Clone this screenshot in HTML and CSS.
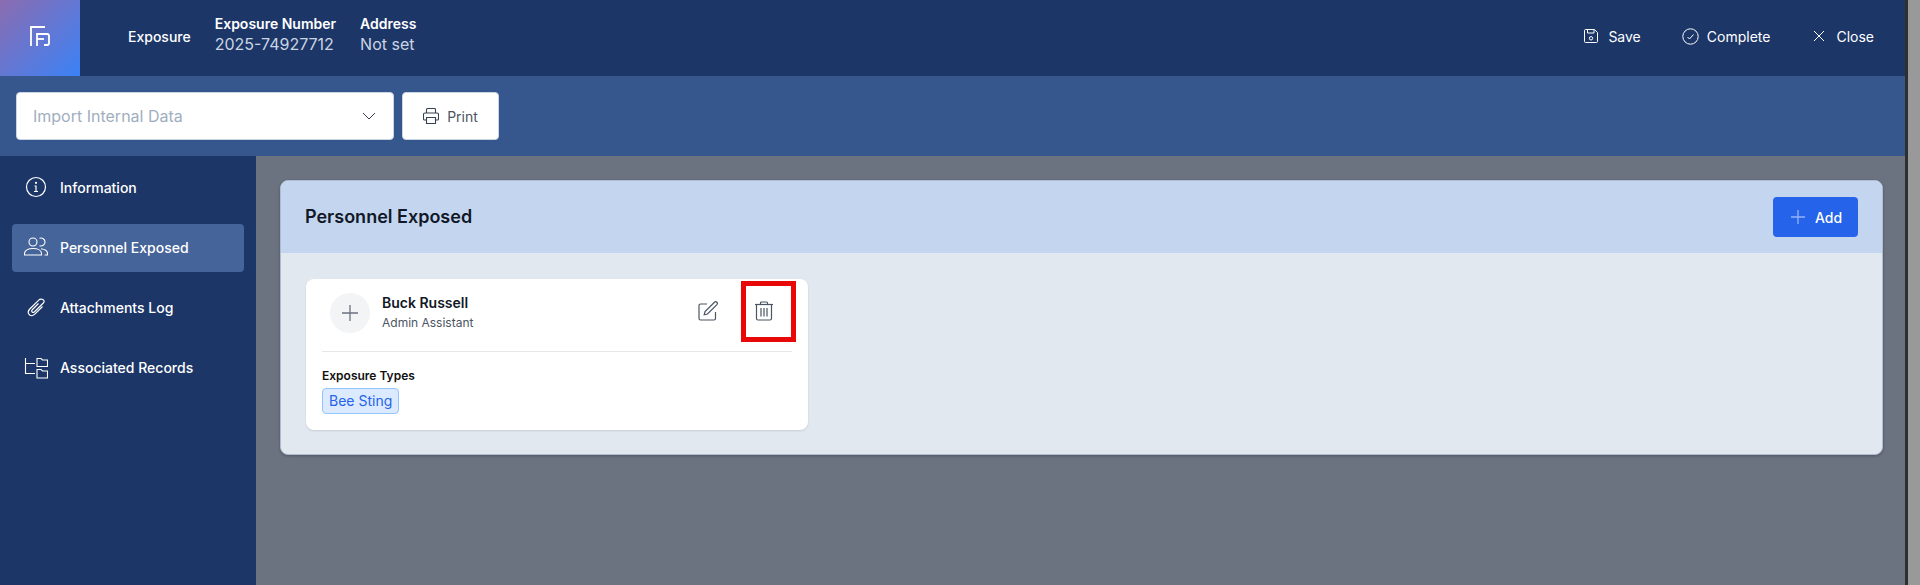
FILE: index.html
```html
<!DOCTYPE html>
<html lang="en">
<head>
  <meta charset="UTF-8">
  <meta name="viewport" content="width=device-width, initial-scale=1.0">
  <title>Exposure</title>
  <link rel="stylesheet" href="styles.css">
</head>
<body>
  <div class="app">
    <header class="topbar">
      <div class="logo">
        <svg width="20" height="20" viewBox="0 0 20 20" fill="none" stroke="#fff" stroke-width="1.800">
          <path d="M1 20V1h14"/>
          <path d="M7 20V8h10q2 0 2 2v7q0 2-2 2h-3"/>
          <path d="M7 13h7"/>
        </svg>
      </div>
      <div class="record-type">Exposure</div>
      <div class="record-field">
        <div class="field-label">Exposure Number</div>
        <div class="field-value">2025-74927712</div>
      </div>
      <div class="record-field">
        <div class="field-label">Address</div>
        <div class="field-value">Not set</div>
      </div>
      <div class="top-actions">
        <a class="top-action action-save">
          <svg width="14" height="14" viewBox="0 0 14 14" fill="none" stroke="#fff" stroke-width="1">
            <path d="M1.500.5h9l3 3v9a1 1 0 0 1-1 1h-11a1 1 0 0 1-1-1v-11a1 1 0 0 1 1-1z"/>
            <path d="M3.500.5v3.500h6.500v-3.500"/>
            <circle cx="7" cy="9.300" r="1.700"/>
          </svg>
          Save
        </a>
        <a class="top-action action-complete">
          <svg width="17" height="17" viewBox="0 0 17 17" fill="none" stroke="#fff" stroke-width="1">
            <circle cx="8.500" cy="8.500" r="7.700"/>
            <path d="M5.500 9l2 2 4-4.500"/>
          </svg>
          Complete
        </a>
        <a class="top-action action-close">
          <svg width="12" height="12" viewBox="0 0 12 12" fill="none" stroke="#fff" stroke-width="1">
            <path d="M1 1l10 10M11 1L1 11"/>
          </svg>
          Close
        </a>
      </div>
    </header>

    <div class="toolbar">
      <div class="select-box">
        <span>Import Internal Data</span>
        <svg width="14" height="8" viewBox="0 0 14 8" fill="none" stroke="#374151" stroke-width="1">
          <path d="M1 1l6 6 6-6"/>
        </svg>
      </div>
      <button class="print-btn">
        <svg width="16" height="16" viewBox="0 0 16 16" fill="none" stroke="#374151" stroke-width="1.100">
          <path d="M3.500 5V1.500a1 1 0 0 1 1-1h7a1 1 0 0 1 1 1V5"/>
          <path d="M3.500 12H1.500a1 1 0 0 1-1-1V6.500a1.500 1.500 0 0 1 1.500-1.500h12a1.500 1.500 0 0 1 1.500 1.500V11a1 1 0 0 1-1 1h-2"/>
          <path d="M3.500 9.500h9v6h-9z"/>
        </svg>
        Print
      </button>
    </div>

    <div class="layout">
      <nav class="sidebar">
        <a class="nav-item">
          <svg class="nav-icon" viewBox="0 0 24 24" fill="none" stroke="#fff" stroke-width="1.200">
            <circle cx="12" cy="12" r="9.500"/>
            <path d="M10.500 11h1.500v5.500M10 16.500h4"/>
            <circle cx="12" cy="7.800" r=".5" fill="#fff"/>
          </svg>
          Information
        </a>
        <a class="nav-item active">
          <svg class="nav-icon" viewBox="0 0 24 24" fill="none" stroke="#fff" stroke-width="1.100">
            <circle cx="9" cy="7" r="4"/>
            <path d="M.5 20v-1.500C.5 15.500 4 13.500 9 13.500s8.500 2 8.500 5V20z"/>
            <path d="M15.500 3.300a4 4 0 1 1 0 7.400"/>
            <path d="M17 13.800c3.500.5 6.500 2 6.500 4.700V20h-3"/>
          </svg>
          Personnel Exposed
        </a>
        <a class="nav-item">
          <svg class="nav-icon" viewBox="0 0 24 24" fill="none" stroke="#fff" stroke-width="1.200">
            <path d="M20 5.500c-1.500-1.800-4-1.800-5.500-.2L5.800 14c-2 2.200-1.700 4.500-.4 5.700 1.300 1.200 3.700 1.200 5.400-.5l7.700-7.700"/>
            <path d="M14.500 8.500l-6 6c-1 1-1 2-.4 2.500.6.600 1.500.5 2.400-.3l8.800-8.700c1.200-1.300 1-2 .7-2.500"/>
          </svg>
          Attachments Log
        </a>
        <a class="nav-item">
          <svg class="nav-icon" viewBox="0 0 24 24" fill="none" stroke="#fff" stroke-width="1.100">
            <path d="M1.500 3v15.500h9.500M1.500 8.500h9.500"/>
            <path d="M13 3.500h4l1.500 1.500h5v6.500h-10.500z"/>
            <path d="M13 14.500h4l1.500 1.500h5v7h-10.500z"/>
          </svg>
          Associated Records
        </a>
      </nav>

      <main class="content">
        <section class="panel">
          <div class="panel-head">
            <h2>Personnel Exposed</h2>
            <button class="add-btn">
              <svg width="14" height="14" viewBox="0 0 14 14" fill="none" stroke="#93b4f8" stroke-width="1.300">
                <path d="M7 0v14M0 7h14"/>
              </svg>
              Add
            </button>
          </div>
          <div class="panel-body">
            <article class="person-card">
              <div class="person-top">
                <div class="avatar">
                  <svg width="16" height="16" viewBox="0 0 16 16" fill="none" stroke="#6b7280" stroke-width="1.300">
                    <path d="M8 0v16M0 8h16"/>
                  </svg>
                </div>
                <div class="person-info">
                  <div class="person-name">Buck Russell</div>
                  <div class="person-role">Admin Assistant</div>
                </div>
                <button class="icon-btn">
                  <svg width="20" height="20" viewBox="0 0 20 20" fill="none" stroke="#4b5563" stroke-width="1.200">
                    <path d="M9 3H2.500A1.500 1.500 0 0 0 1 4.500v13A1.500 1.500 0 0 0 2.500 19H16a1.500 1.500 0 0 0 1.500-1.500V11"/>
                    <path d="M16.500 1.200a1.700 1.700 0 0 1 2.400 2.400L9.500 13l-3.300.8.800-3.300z"/>
                  </svg>
                </button>
                <button class="icon-btn delete-btn">
                  <svg width="20" height="20" viewBox="0 0 20 20" fill="none" stroke="#4b5563" stroke-width="1.200">
                    <path d="M1 3.500h18"/>
                    <path d="M6.500 3.500V2a1 1 0 0 1 1-1h5a1 1 0 0 1 1 1v1.500"/>
                    <path d="M2.500 3.500v14a1.500 1.500 0 0 0 1.500 1.500h12a1.500 1.500 0 0 0 1.500-1.500v-14"/>
                    <path d="M7 7v8.500M10 7v8.500M13 7v8.500"/>
                  </svg>
                </button>
                <span class="highlight-box"></span>
              </div>
              <div class="person-bottom">
                <div class="types-label">Exposure Types</div>
                <span class="chip">Bee Sting</span>
              </div>
            </article>
          </div>
        </section>
      </main>
    </div>
  </div>
  <div class="edge-strip"></div>
</body>
</html>
```

FILE: styles.css
```css
* {
  box-sizing: border-box;
}
html, body {
  margin: 0;
  height: 585px;
  overflow: hidden;
}
body {
  display: flex;
  font-family: 'Inter', 'Liberation Sans', sans-serif;
  background: #6b7280;
}
.app {
  width: 1905px;
  height: 585px;
  display: flex;
  flex-direction: column;
}
.edge-strip {
  width: 15px;
  background: #999;
  border-left: 3px solid #2f2f2f;
}
.topbar {
  height: 76px;
  background: #1c3668;
  display: flex;
  color: #fff;
}
.logo {
  width: 80px;
  padding-bottom: 4px;
  display: flex;
  align-items: center;
  justify-content: center;
  background: linear-gradient(135deg, #8b6cb0, #3b82f6);
}
.record-type {
  margin: 0 0 4px 48px;
  align-self: center;
  font-size: 14px;
  font-weight: 500;
}
.record-field {
  margin: 0 0 8px 24px;
  align-self: center;
}
.field-label {
  font-size: 14px;
  font-weight: 600;
  line-height: 20px;
}
.field-value {
  font-size: 16px;
  line-height: 20px;
  color: #cbd5e1;
}
.top-actions {
  margin-left: auto;
  padding: 0 31px 4px 0;
  display: flex;
  align-items: center;
}
.top-action {
  display: flex;
  align-items: center;
  font-size: 14px;
  font-weight: 400;
}
.action-save {
  gap: 10px;
}
.action-complete {
  margin-left: 41px;
  gap: 8px;
}
.action-close {
  margin-left: 43px;
  gap: 11px;
}
.toolbar {
  height: 80px;
  background: #36568e;
  padding: 16px;
  display: flex;
  gap: 8px;
}
.select-box {
  width: 378px;
  height: 48px;
  background: #fff;
  border: 1px solid #cbd5e1;
  border-radius: 4px;
  padding: 0 17px 0 16px;
  display: flex;
  align-items: center;
  justify-content: space-between;
  font-size: 16px;
  color: #a0aec0;
}
.print-btn {
  width: 97px;
  height: 48px;
  background: #fff;
  border: 1px solid #cbd5e1;
  border-radius: 4px;
  display: flex;
  align-items: center;
  justify-content: center;
  gap: 8px;
  font-family: inherit;
  font-size: 14px;
  font-weight: 400;
  color: #4b5563;
}
.layout {
  flex: 1;
  display: flex;
}
.sidebar {
  width: 256px;
  background: #1c3668;
  padding: 8px 12px;
  display: flex;
  flex-direction: column;
  gap: 12px;
}
.nav-item {
  height: 48px;
  padding: 0 12px 2px;
  border-radius: 4px;
  display: flex;
  align-items: center;
  gap: 12px;
  color: #fff;
  font-size: 14px;
  font-weight: 450;
}
.nav-item.active {
  background: #45649a;
}
.nav-icon {
  width: 24px;
  height: 24px;
}
.content {
  flex: 1;
  padding: 24px 22px 0 24px;
}
.panel {
  height: 275px;
  background: #e2e8f0;
  border: 1px solid #aebcd2;
  border-radius: 8px;
  box-shadow: 0 1px 3px rgba(0,0,0,0.25);
  overflow: hidden;
}
.panel-head {
  height: 72px;
  background: #c4d5ef;
  padding: 0 24px;
  display: flex;
  align-items: center;
  justify-content: space-between;
}
.panel-head h2 {
  margin: 0 0 1px;
  font-size: 18px;
  font-weight: 600;
  color: #111827;
}
.add-btn {
  width: 85px;
  height: 40px;
  padding: 0 0 0 2px;
  background: #2563eb;
  border: none;
  border-radius: 4px;
  color: #fff;
  display: flex;
  align-items: center;
  justify-content: center;
  gap: 10px;
  font-family: inherit;
  font-size: 14px;
  font-weight: 500;
}
.panel-body {
  padding: 26px 25px;
}
.person-card {
  width: 502px;
  height: 151px;
  background: #fff;
  border-radius: 8px;
  box-shadow: 0 1px 2px rgba(0,0,0,0.12);
  padding: 0 16px;
}
.person-top {
  position: relative;
  height: 73px;
  padding: 14px 18px 0 8px;
  display: flex;
  align-items: flex-start;
  border-bottom: 1px solid #e5e7eb;
}
.avatar {
  width: 40px;
  height: 40px;
  border-radius: 50%;
  background: #f3f4f6;
  display: flex;
  align-items: center;
  justify-content: center;
}
.person-info {
  margin-left: 12px;
  flex: 1;
}
.person-name {
  font-size: 14px;
  font-weight: 600;
  line-height: 20px;
  color: #111827;
}
.person-role {
  margin-top: 1px;
  font-size: 12px;
  line-height: 18px;
  color: #4b5563;
}
.icon-btn {
  width: 20px;
  height: 20px;
  padding: 0;
  margin-top: 8px;
  border: none;
  background: none;
}
.delete-btn {
  margin-left: 36px;
}
.highlight-box {
  position: absolute;
  left: 419px;
  top: 2px;
  width: 55px;
  height: 61px;
  border: 5px solid #e80808;
}
.person-bottom {
  padding-top: 16px;
}
.types-label {
  font-size: 12px;
  font-weight: 600;
  line-height: 16px;
  color: #111;
}
.chip {
  display: inline-block;
  margin-top: 4px;
  height: 26px;
  padding: 0 6px;
  background: #dbeafe;
  border: 1px solid #93c5fd;
  border-radius: 4px;
  font-size: 14px;
  line-height: 24px;
  color: #2563eb;
}
```
